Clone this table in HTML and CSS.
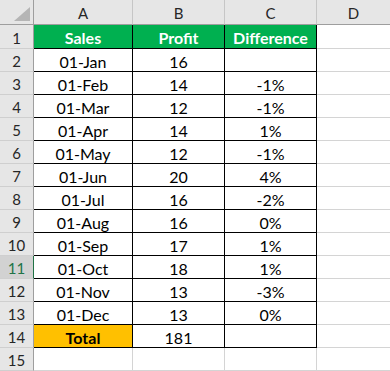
FILE: index.html
```html
<!DOCTYPE html>
<html>
<head>
<meta charset="utf-8">
<link rel="stylesheet" href="styles.css">
</head>
<body>
<div class="sheet">
  <div class="hd corner"><svg class="tri" width="16" height="14" viewBox="0 0 16 14"><polygon points="16,0 16,14 0,14" fill="#b5b5b5"/></svg></div>
  <div class="hd colh">A</div>
  <div class="hd colh">B</div>
  <div class="hd colh">C</div>
  <div class="hd colh last">D</div>

  <div class="hd rowh first">1</div>
  <div class="c b g first">Sales</div>
  <div class="c b g first">Profit</div>
  <div class="c b g first">Difference</div>
  <div class="c e first last"></div>

  <div class="hd rowh">2</div><div class="c b">01-Jan</div><div class="c b">16</div><div class="c b"></div><div class="c e last"></div>
  <div class="hd rowh">3</div><div class="c b">01-Feb</div><div class="c b">14</div><div class="c b">-1%</div><div class="c e last"></div>
  <div class="hd rowh">4</div><div class="c b">01-Mar</div><div class="c b">12</div><div class="c b">-1%</div><div class="c e last"></div>
  <div class="hd rowh">5</div><div class="c b">01-Apr</div><div class="c b">14</div><div class="c b">1%</div><div class="c e last"></div>
  <div class="hd rowh">6</div><div class="c b">01-May</div><div class="c b">12</div><div class="c b">-1%</div><div class="c e last"></div>
  <div class="hd rowh">7</div><div class="c b">01-Jun</div><div class="c b">20</div><div class="c b">4%</div><div class="c e last"></div>
  <div class="hd rowh">8</div><div class="c b">01-Jul</div><div class="c b">16</div><div class="c b">-2%</div><div class="c e last"></div>
  <div class="hd rowh">9</div><div class="c b">01-Aug</div><div class="c b">16</div><div class="c b">0%</div><div class="c e last"></div>
  <div class="hd rowh">10</div><div class="c b">01-Sep</div><div class="c b">17</div><div class="c b">1%</div><div class="c e last"></div>
  <div class="hd rowh sel">11</div><div class="c b">01-Oct</div><div class="c b">18</div><div class="c b">1%</div><div class="c e last"></div>
  <div class="hd rowh">12</div><div class="c b">01-Nov</div><div class="c b">13</div><div class="c b">-3%</div><div class="c e last"></div>
  <div class="hd rowh">13</div><div class="c b">01-Dec</div><div class="c b">13</div><div class="c b">0%</div><div class="c e last"></div>
  <div class="hd rowh">14</div><div class="c b o">Total</div><div class="c b">181</div><div class="c b"></div><div class="c e last"></div>
  <div class="hd rowh">15</div><div class="c e"></div><div class="c e"></div><div class="c e"></div><div class="c e last"></div>
</div>
</body>
</html>
```

FILE: styles.css
```css
html, body {
  margin: 0;
  padding: 0;
  background: #ffffff;
}
.sheet {
  display: grid;
  grid-template-columns: 34px 99px 92px 92px 1fr;
  grid-template-rows: 25px 24px repeat(14, 23px);
  width: 390px;
  font-family: Lato, "Liberation Sans", sans-serif;
  font-size: 16px;
  color: #000000;
}
.sheet > div {
  box-sizing: border-box;
  display: flex;
  align-items: center;
  justify-content: center;
  padding-top: 2px;
  border-right: 1px solid #d4d4d4;
  border-bottom: 1px solid #d4d4d4;
}
.hd {
  background: #e6e6e6;
  color: #262626;
  font-size: 15px;
}
.colh {
  border-right-color: #c6c6c6 !important;
  border-bottom-color: #9e9e9e !important;
}
.corner {
  border-right-color: #9e9e9e !important;
  border-bottom-color: #9e9e9e !important;
  position: relative;
}
.tri {
  position: absolute;
  right: 3px;
  bottom: 3px;
}
.rowh {
  border-right-color: #9e9e9e !important;
  border-bottom-color: #cfcfcf !important;
}
.rowh.sel {
  background: #d2d2d2;
  color: #217346;
  border-right: 1px solid #217346 !important;
}
.sheet > .last {
  border-right: none;
}
.b {
  border-right-color: #000000 !important;
  border-bottom-color: #000000 !important;
}
.g {
  background: #00b050;
  color: #ffffff;
  font-weight: bold;
}
.o {
  background: #ffc000;
  font-weight: bold;
}
```
